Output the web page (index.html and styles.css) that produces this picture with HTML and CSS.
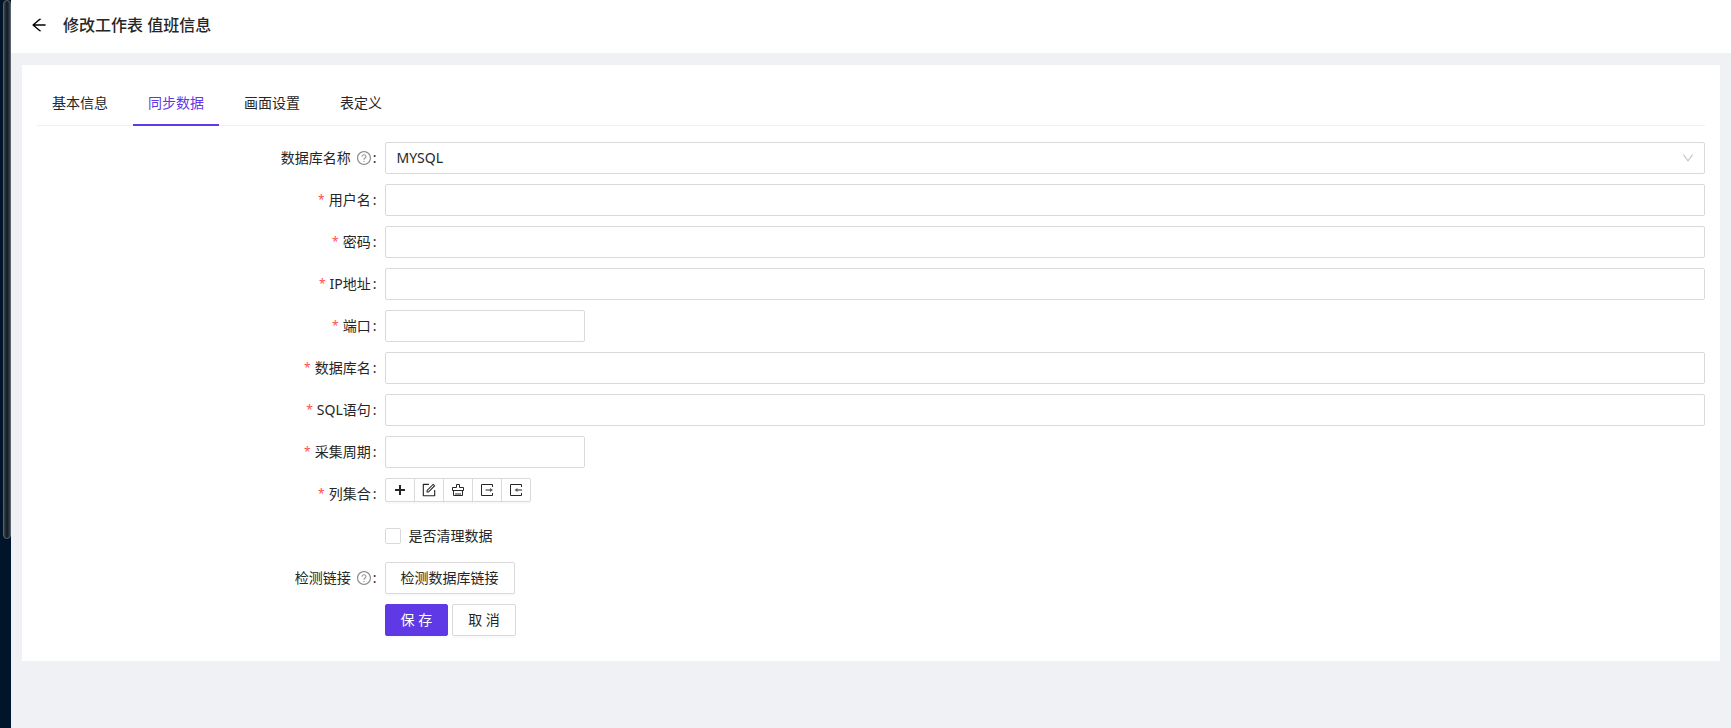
FILE: index.html
```html
<!DOCTYPE html>
<html lang="zh-CN">
<head>
  <meta charset="UTF-8">
  <meta name="viewport" content="width=device-width, initial-scale=1.0">
  <title>修改工作表 值班信息</title>
  <link rel="stylesheet" href="styles.css">
</head>
<body>
  <!-- shared icon shapes -->
  <svg class="icon-defs" aria-hidden="true">
    <symbol id="icon-question" viewBox="64 64 896 896">
      <path d="M512 64C264.600 64 64 264.600 64 512s200.600 448 448 448 448-200.600 448-448S759.400 64 512 64zm0 820c-205.400 0-372-166.600-372-372s166.600-372 372-372 372 166.600 372 372-166.600 372-372 372z"/>
      <path d="M623.600 316.700C593.600 290.400 554 276 512 276s-81.600 14.500-111.600 40.700C369.200 344 352 380.700 352 420v7.600c0 4.400 3.600 8 8 8h48c4.400 0 8-3.600 8-8V420c0-44.100 43.100-80 96-80s96 35.900 96 80c0 31.100-22 59.600-56.100 72.700-21.200 8.100-39.200 22.300-52.100 40.900-13.100 19-19.900 41.800-19.900 64.900V620c0 4.400 3.600 8 8 8h48c4.400 0 8-3.600 8-8v-22.700a48.300 48.300 0 0130.900-44.800c59-22.700 97.100-74.700 97.100-132.500.1-39.300-17.100-76-48.300-103.300zM472 732a40 40 0 1080 0 40 40 0 10-80 0z"/>
    </symbol>
  </svg>

  <aside class="sidebar">
    <div class="scroll-thumb"></div>
  </aside>

  <div class="page">
    <header class="page-header">
      <a href="#" class="back" aria-label="返回">
        <svg width="16" height="16" viewBox="64 64 896 896"><path d="M872 474H286.900l350.200-304c5.600-4.900 2.200-14-5.200-14h-88.500c-3.900 0-7.600 1.400-10.500 3.900L155 487.800a31.960 31.960 0 000 48.300L535.100 866c1.500 1.300 3.300 2 5.200 2h91.500c7.400 0 10.800-9.200 5.200-14L286.900 550H872c4.400 0 8-3.600 8-8v-60c0-4.400-3.600-8-8-8z"/></svg>
      </a>
      <h1>修改工作表 值班信息</h1>
    </header>

    <main class="card">
      <nav class="tabs">
        <a href="#" class="tab">基本信息</a>
        <a href="#" class="tab active">同步数据</a>
        <a href="#" class="tab">画面设置</a>
        <a href="#" class="tab">表定义</a>
      </nav>

      <form class="form">
        <div class="form-item">
          <label for="db-type">数据库名称<svg class="help"><use href="#icon-question"/></svg></label>
          <div class="select">
            <select id="db-type">
              <option>MYSQL</option>
            </select>
            <svg class="arrow" width="12" height="12" viewBox="64 64 896 896"><path d="M884 256h-75c-5.100 0-9.900 2.500-12.900 6.600L512 654.200 227.900 262.600c-3-4.100-7.800-6.600-12.900-6.600h-75c-6.500 0-10.300 7.400-6.500 12.700l352.600 486.100c12.800 17.600 39 17.600 51.700 0l352.600-486.100c3.900-5.300.1-12.700-6.400-12.700z"/></svg>
          </div>
        </div>
        <div class="form-item">
          <label for="username" class="required">用户名</label>
          <input type="text" id="username">
        </div>
        <div class="form-item">
          <label for="password" class="required">密码</label>
          <input type="password" id="password">
        </div>
        <div class="form-item">
          <label for="ip" class="required">IP地址</label>
          <input type="text" id="ip">
        </div>
        <div class="form-item">
          <label for="port" class="required">端口</label>
          <input type="text" id="port" class="short">
        </div>
        <div class="form-item">
          <label for="db-name" class="required">数据库名</label>
          <input type="text" id="db-name">
        </div>
        <div class="form-item">
          <label for="sql" class="required">SQL语句</label>
          <input type="text" id="sql">
        </div>
        <div class="form-item">
          <label for="period" class="required">采集周期</label>
          <input type="text" id="period" class="short">
        </div>
        <div class="form-item">
          <label for="add-column" class="required">列集合</label>
          <div class="btn-group">
            <button type="button" id="add-column" aria-label="新增">
              <svg viewBox="0 0 14 14"><path class="thick" d="M7 2v10M2 7h10"/></svg>
            </button>
            <button type="button" aria-label="编辑">
              <svg class="solid" viewBox="64 64 896 896"><path d="M904 512h-56c-4.400 0-8 3.600-8 8v320H184V184h320c4.400 0 8-3.600 8-8v-56c0-4.400-3.600-8-8-8H144c-17.700 0-32 14.300-32 32v736c0 17.700 14.300 32 32 32h736c17.700 0 32-14.300 32-32V520c0-4.400-3.600-8-8-8z"/><path d="M355.900 534.900L354 653.800c-.1 8.900 7.100 16.200 16 16.200h.4l118-2.900c2-.1 4-.9 5.400-2.300l415.900-415c3.100-3.100 3.100-8.200 0-11.300L785.400 114.300c-1.600-1.600-3.600-2.300-5.700-2.300s-4.100.8-5.700 2.300l-415.800 415a8.300 8.300 0 00-2.300 5.600zm63.500 23.600L779.700 199l45.200 45.100-360.500 359.700-45.700 1.100.7-46.400z"/></svg>
            </button>
            <button type="button" aria-label="清空">
              <svg viewBox="0 0 14 14"><path d="M5.500 4.500v-3h3v3h4v3h-11v-3h4M2.500 7.500v5h9v-5M5 12.500v-2.500M7 12.500v-2.500M9 12.500v-2.500"/></svg>
            </button>
            <button type="button" aria-label="导出">
              <svg viewBox="0 0 14 14"><path d="M12.500 4V1.500h-11v11h11V10M5.500 7h5"/><path class="fill" d="M10 5l3 2-3 2z"/></svg>
            </button>
            <button type="button" aria-label="导入">
              <svg viewBox="0 0 14 14"><path d="M12.500 4V1.500h-11v11h11V10M8 7h5"/><path class="fill" d="M8.500 5l-3 2 3 2z"/></svg>
            </button>
          </div>
        </div>
        <div class="form-item">
          <label class="checkbox"><input type="checkbox">是否清理数据</label>
        </div>
        <div class="form-item">
          <label for="test-link">检测链接<svg class="help"><use href="#icon-question"/></svg></label>
          <button type="button" id="test-link" class="btn">检测数据库链接</button>
        </div>
        <div class="form-item">
          <div class="actions">
            <button type="button" class="btn btn-primary">保 存</button>
            <button type="button" class="btn">取 消</button>
          </div>
        </div>
      </form>
    </main>
  </div>
</body>
</html>
```
FILE: styles.css
```css
* {
  box-sizing: border-box;
}

body {
  display: flex;
  min-height: 100vh;
  margin: 0;
  background-color: #f0f1f5;
  color: #262626;
  font-family: "Noto Sans", "Noto Sans CJK SC", sans-serif;
  font-size: 14px;
  line-height: 22px;
}

a {
  color: inherit;
  text-decoration: none;
}

input, select, button {
  color: inherit;
  font-family: inherit;
  font-size: 14px;
}

.icon-defs {
  position: absolute;
  width: 0;
  height: 0;
}

.sidebar {
  flex: none;
  width: 11px;
  padding-left: 3px;
  background-color: #001529;
}

.scroll-thumb {
  height: 74vh;
  border: 1px solid #5c646b;
  border-radius: 4px;
  background: linear-gradient(to right, #3a434b, #17212b 40%, #17212b 60%, #3a434b);
}

.page {
  flex: 1;
  min-width: 0;
}

.page-header {
  display: flex;
  align-items: center;
  gap: 16px;
  height: 53px;
  padding: 0 20px 3px;
  background-color: #fff;
}

.back {
  display: flex;
}

h1 {
  margin: 0;
  font-size: 16px;
  font-weight: 500;
}

.card {
  margin: 12px 11px;
  padding: 15px 15px 25px;
  background-color: #fff;
}

.tabs {
  display: flex;
  gap: 10px;
  margin-bottom: 16px;
  border-bottom: 1px solid #f0f0f0;
}

.tab {
  margin-bottom: -1px;
  padding: 12px 15px 10px;
  border-bottom: 2px solid transparent;
}

.tab.active {
  color: #5f39e6;
  border-color: #5f39e6;
}

.form {
  display: grid;
  gap: 10px;
}

.form-item {
  display: grid;
  grid-template-columns: 5fr 19fr;
  align-items: center;
  min-height: 32px;
}

.form-item > :last-child {
  grid-column: 2;
}

.form-item > label:first-child:not(.checkbox) {
  display: flex;
  justify-content: flex-end;
  align-items: center;
}

.form-item > label:not(.checkbox)::after {
  content: ":";
  margin: 0 8px 0 2px;
}

.required::before {
  content: "*";
  margin-right: 4px;
  color: #ff4d4f;
  font-size: 12px;
}

.help {
  width: 14px;
  height: 14px;
  margin-left: 6px;
  fill: #8c8c8c;
}

input[type="text"], input[type="password"], select {
  width: 100%;
  height: 32px;
  padding: 0 11px;
  border: 1px solid #d9d9d9;
  border-radius: 2px;
  background-color: #fff;
}

input.short {
  width: 200px;
}

.select {
  position: relative;
}

select {
  display: block;
  appearance: none;
}

.form-item select {
  padding-bottom: 2px;
}

.arrow {
  position: absolute;
  top: 10px;
  right: 11px;
  fill: #bfbfbf;
  pointer-events: none;
}

.btn-group {
  display: flex;
  align-self: start;
}

.btn-group button {
  display: flex;
  justify-content: center;
  align-items: center;
  width: 30px;
  height: 24px;
  padding: 0;
  border: 1px solid #d9d9d9;
  background-color: #fff;
  box-shadow: 0 2px 0 rgba(0, 0, 0, 0.02);
}

.btn-group button + button {
  margin-left: -1px;
}

.btn-group button:first-child {
  border-radius: 2px 0 0 2px;
}

.btn-group button:last-child {
  border-radius: 0 2px 2px 0;
}

.btn-group svg {
  width: 14px;
  height: 14px;
  fill: none;
  stroke: #262626;
}

.btn-group .solid {
  fill: #262626;
  stroke: none;
}

.btn-group .thick {
  stroke-width: 2;
}

.btn-group .fill {
  fill: #595959;
  stroke: none;
}

.checkbox {
  display: flex;
  align-items: center;
  gap: 8px;
}

.checkbox input {
  appearance: none;
  width: 16px;
  height: 16px;
  margin: 0;
  border: 1px solid #d9d9d9;
  border-radius: 2px;
  background-color: #fff;
}

.btn {
  justify-self: start;
  height: 32px;
  padding: 0 15px 2px;
  border: 1px solid #d9d9d9;
  border-radius: 2px;
  background-color: #fff;
  box-shadow: 0 2px 0 rgba(0, 0, 0, 0.02);
}

.btn-primary {
  border-color: #5f39e6;
  background-color: #5f39e6;
  color: #fff;
}

.actions {
  display: flex;
  gap: 4px;
}
```
